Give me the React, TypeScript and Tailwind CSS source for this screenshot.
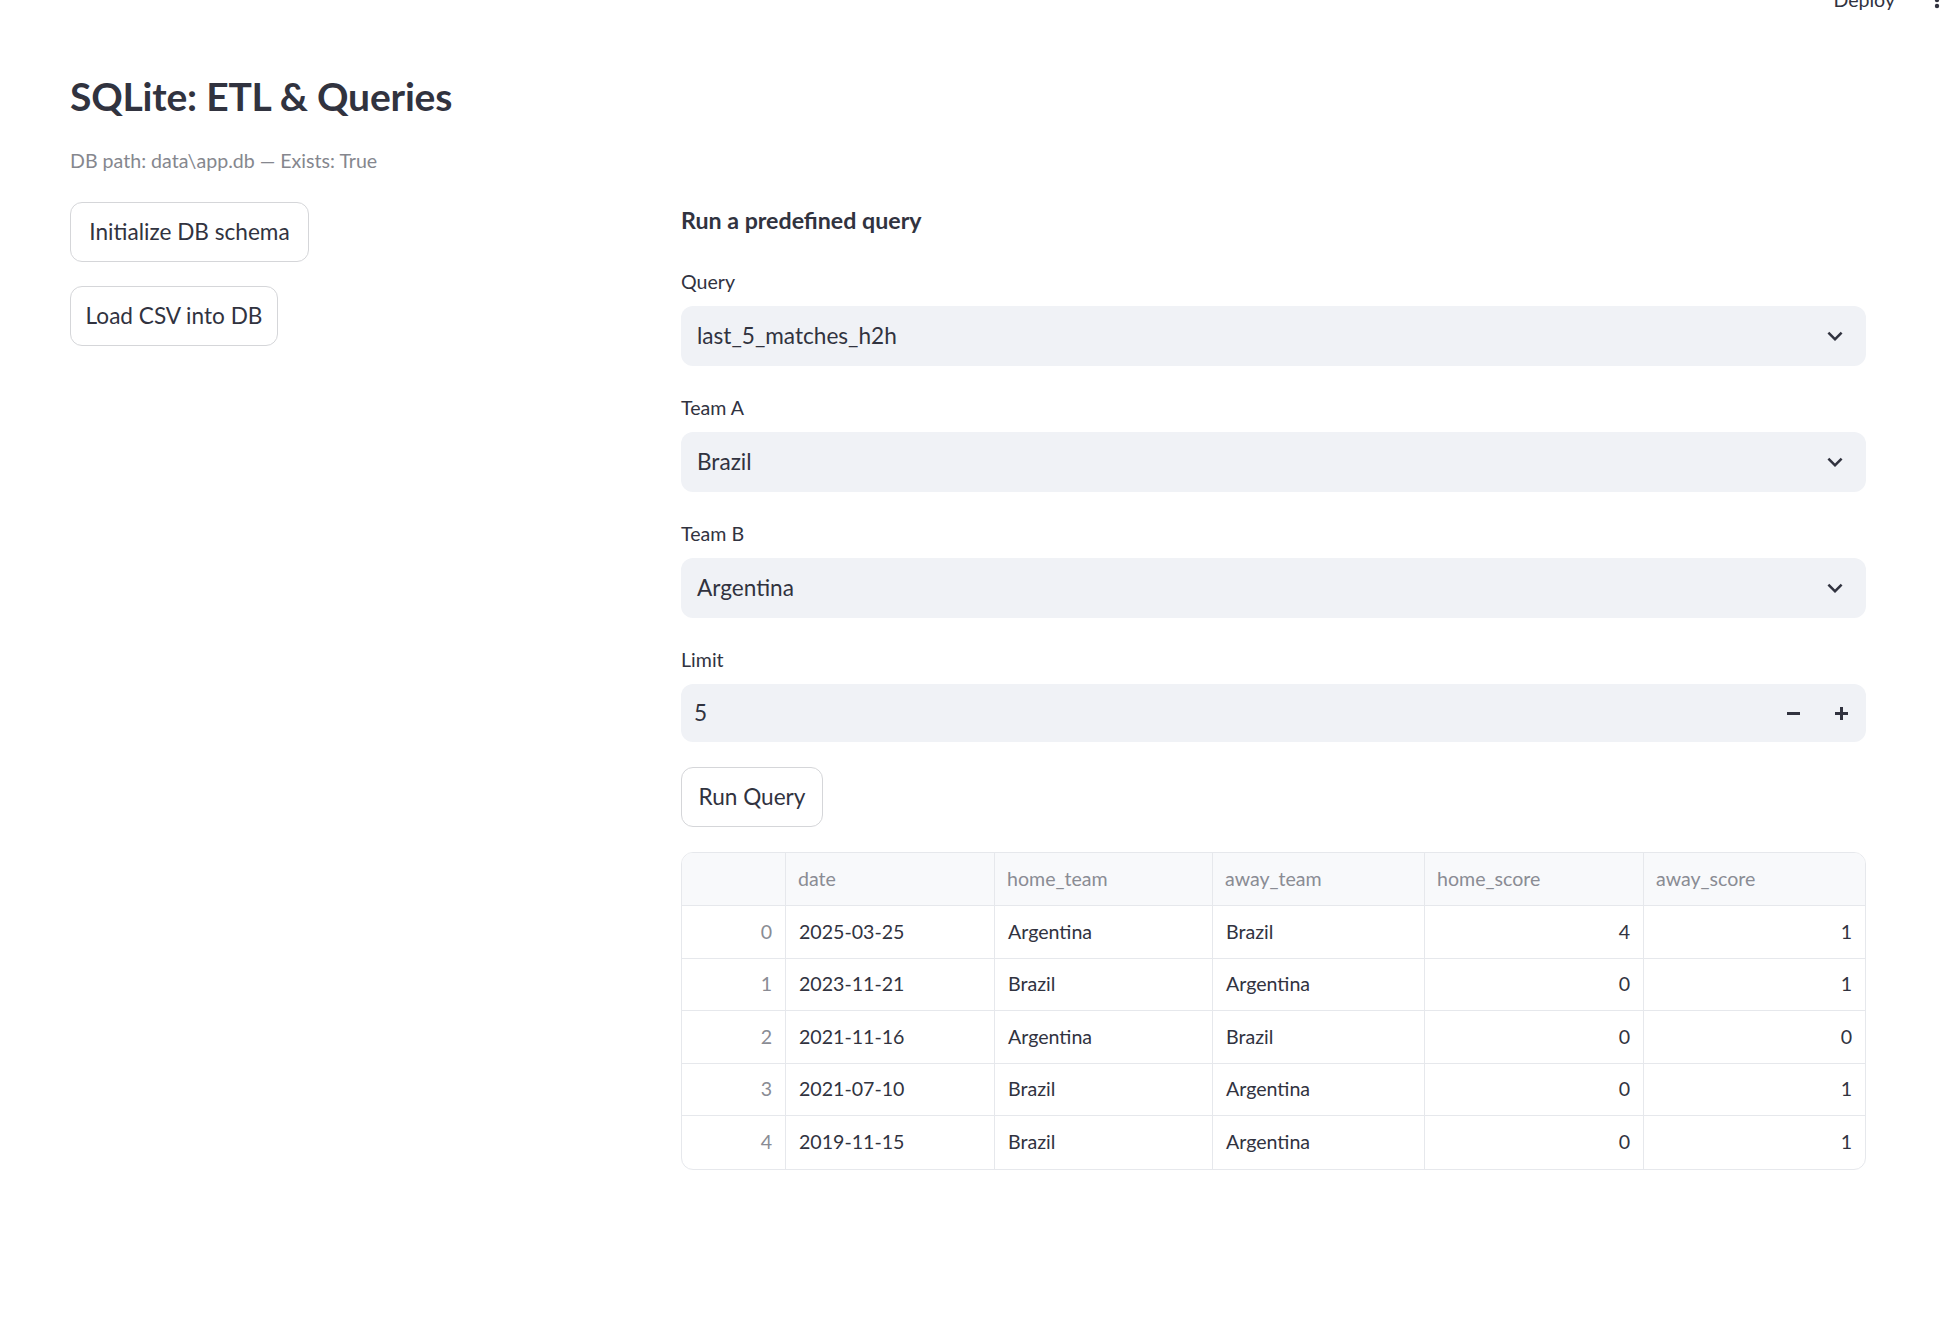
import React from "react";

const FONT = '"Lato", "Noto Sans", sans-serif';

function Chevron() {
  return (
    <svg width="30" height="30" viewBox="0 0 24 24" fill="#31333f">
      <path d="M16.59 8.59L12 13.17 7.41 8.59 6 10l6 6 6-6z" />
    </svg>
  );
}

function SelectBox({ value }: { value: string }) {
  return (
    <div className="flex h-[60px] items-center justify-between rounded-[12px] bg-[#f0f2f6] pl-[16px] pr-[16px]">
      <span className="text-[22.6px] leading-[30px] text-[#31333f]">{value}</span>
      <Chevron />
    </div>
  );
}

function Label({ children }: { children: React.ReactNode }) {
  return <div className="mb-[12px] h-[24px] text-[19.6px] leading-[24px] text-[#31333f]">{children}</div>;
}

function Button({ children, w }: { children: React.ReactNode; w: string }) {
  return (
    <button
      className={`flex h-[60px] ${w} items-center justify-center rounded-[12px] border border-[#d5d6d9] bg-white text-[22.6px] leading-[30px] text-[#31333f]`}
    >
      {children}
    </button>
  );
}

const rows = [
  ["0", "2025-03-25", "Argentina", "Brazil", "4", "1"],
  ["1", "2023-11-21", "Brazil", "Argentina", "0", "1"],
  ["2", "2021-11-16", "Argentina", "Brazil", "0", "0"],
  ["3", "2021-07-10", "Brazil", "Argentina", "0", "1"],
  ["4", "2019-11-15", "Brazil", "Argentina", "0", "1"],
];

const headers = ["", "date", "home_team", "away_team", "home_score", "away_score"];

function DataTable() {
  return (
    <div className="overflow-hidden rounded-[12px] border border-[#e6e8ec] text-[19.6px] leading-[26px]">
      <div className="grid h-[53px] grid-cols-[104px_209px_218px_212px_219px_1fr] border-b border-[#e6e8ec] bg-[#f8f9fb]">
        {headers.map((h, i) => (
          <div
            key={i}
            className={`flex items-center px-[12px] text-[#8a8c94] ${i < 5 ? "border-r border-[#e6e8ec]" : ""}`}
          >
            {h}
          </div>
        ))}
      </div>
      {rows.map((r, ri) => (
        <div
          key={ri}
          className={`grid h-[52.5px] grid-cols-[104px_209px_218px_212px_219px_1fr] ${ri < 4 ? "border-b border-[#e6e8ec]" : ""}`}
        >
          {r.map((c, ci) => (
            <div
              key={ci}
              className={`flex items-center px-[13px] ${ci < 5 ? "border-r border-[#e6e8ec]" : ""} ${
                ci === 0 ? "justify-end text-[#8a8c94]" : "text-[#31333f]"
              } ${ci >= 4 ? "justify-end" : ""}`}
            >
              {c}
            </div>
          ))}
        </div>
      ))}
    </div>
  );
}

export default function App() {
  return (
    <div className="relative min-h-screen overflow-hidden bg-white text-[#31333f]" style={{ fontFamily: FONT }}>
      {/* header (scrolled, partially visible) */}
      <div className="absolute right-0 top-0 flex h-[8px] items-end">
        <div className="absolute right-[50px] top-[-11px] text-[19.6px] leading-[21px] text-[#31333f]">Deploy</div>
        <svg className="absolute right-[4px] top-[-14px]" width="8" height="24" viewBox="0 0 8 24" fill="#31333f">
          <circle cx="4" cy="6" r="2.2" />
          <circle cx="4" cy="14" r="2.2" />
          <circle cx="4" cy="20" r="2.2" />
        </svg>
      </div>

      <div className="px-[70px] pt-[70px]">
        <h1 className="h-[52px] text-[39px] font-bold leading-[52px] tracking-[-0.2px] text-[#31333f]">
          SQLite: ETL &amp; Queries
        </h1>
        <div className="mt-[26px] h-[26px] text-[19.6px] leading-[26px] text-[#85878e]">
          DB path: data\app.db — Exists: True
        </div>

        <div className="mt-[28px] flex">
          <div className="flex w-[611px] flex-col gap-[24px]">
            <Button w="w-[239px]">Initialize DB schema</Button>
            <Button w="w-[208px]">Load CSV into DB</Button>
          </div>

          <div className="flex-1 pr-[9px]">
            <div className="h-[36px] text-[23.2px] font-bold leading-[36px] text-[#31333f]">Run a predefined query</div>

            <div className="mt-[32px]">
              <Label>Query</Label>
              <SelectBox value="last_5_matches_h2h" />
            </div>

            <div className="mt-[30px]">
              <Label>Team A</Label>
              <SelectBox value="Brazil" />
            </div>

            <div className="mt-[30px]">
              <Label>Team B</Label>
              <SelectBox value="Argentina" />
            </div>

            <div className="mt-[30px]">
              <Label>Limit</Label>
              <div className="flex h-[58px] items-center justify-between rounded-[12px] bg-[#f0f2f6] pl-[13px] pr-[18px]">
                <span className="text-[22.6px] leading-[30px] text-[#31333f]">5</span>
                <div className="flex items-center gap-[35px]">
                  <div className="h-[3px] w-[13px] bg-[#31333f]" />
                  <div className="relative h-[13px] w-[13px]">
                    <div className="absolute left-0 top-[5px] h-[3px] w-[13px] bg-[#31333f]" />
                    <div className="absolute left-[5px] top-0 h-[13px] w-[3px] bg-[#31333f]" />
                  </div>
                </div>
              </div>
            </div>

            <div className="mt-[25px]">
              <Button w="w-[142px]">Run Query</Button>
            </div>

            <div className="mt-[25px]">
              <DataTable />
            </div>
          </div>
        </div>
      </div>
    </div>
  );
}
